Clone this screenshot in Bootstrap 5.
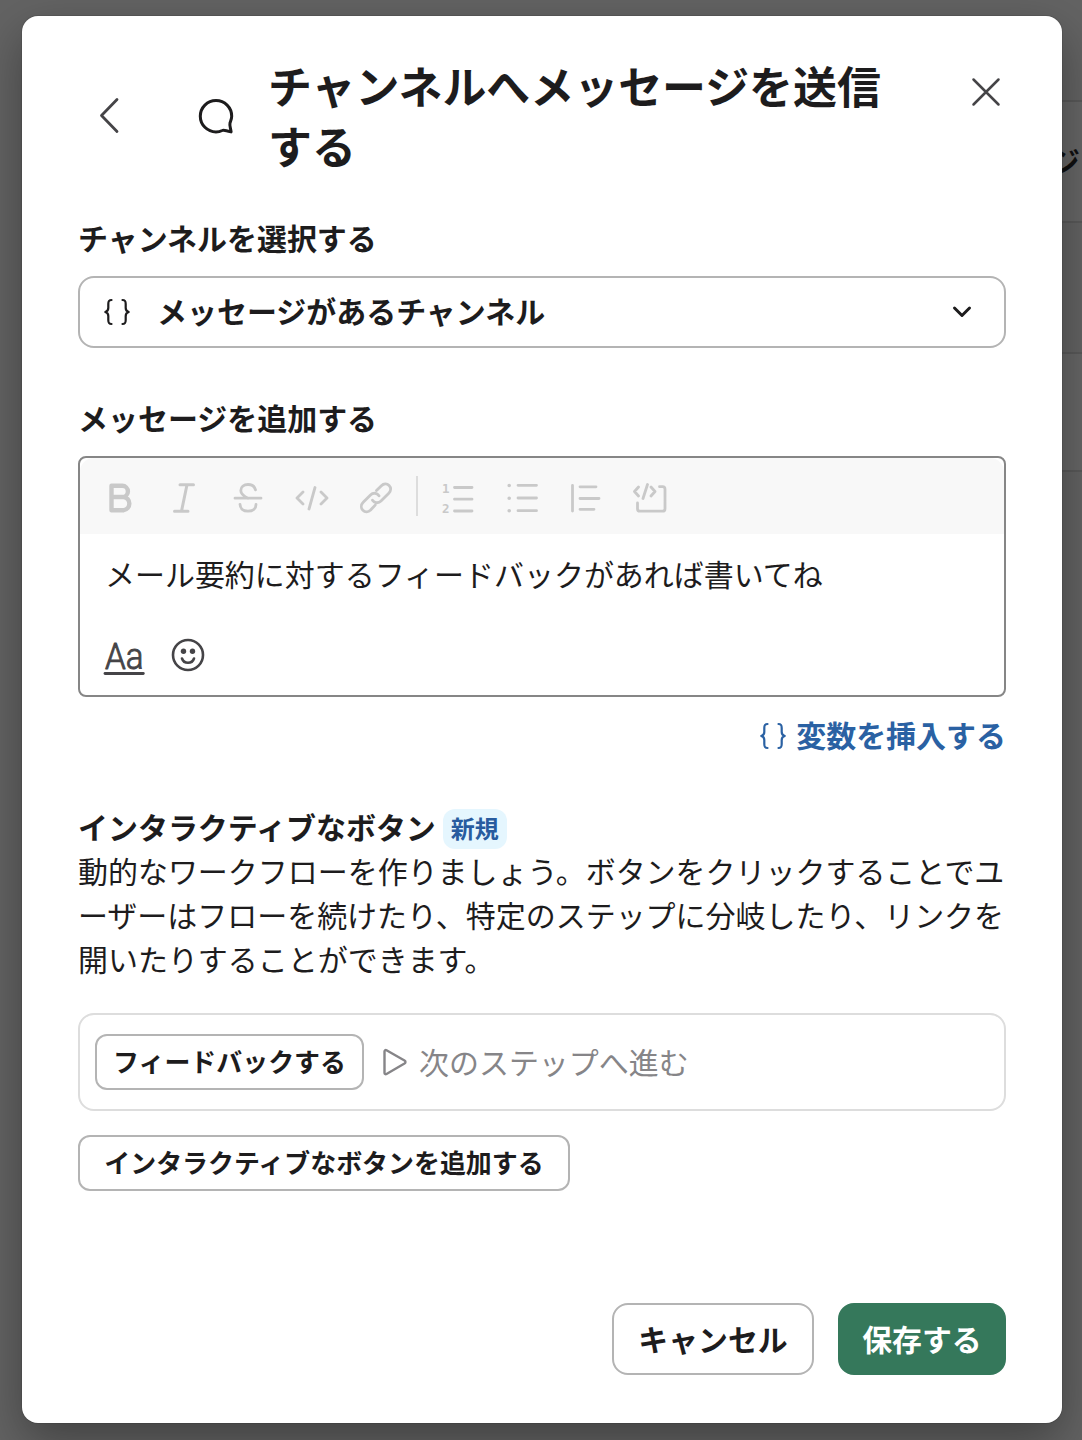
<!DOCTYPE html>
<html lang="ja">
<head>
<meta charset="utf-8">
<meta name="viewport" content="width=device-width, initial-scale=1">
<title>チャンネルへメッセージを送信する</title>
<link href="https://cdn.jsdelivr.net/npm/bootstrap@5.3.0/dist/css/bootstrap.min.css" rel="stylesheet">
<style>
  body { font-family: "Noto Sans CJK JP", sans-serif; font-size: 29.98px; line-height: 44px; color: #1d1c1d; background: #636363; height: 1440px; overflow: hidden; }
  svg { display: block; flex: none; overflow: visible; fill: none; stroke: currentColor; stroke-linecap: round; stroke-linejoin: round; }
  .backdrop-page { position: absolute; top: 0; right: 0; width: 62px; padding-top: 100px; }
  .step-card { height: 123px; border: solid #595959; border-width: 2px 0; background: #666; color: #101010; line-height: 117px; padding-right: 2px; }
  .step-card + .step-card { margin-top: 129px; height: 120px; }
  .dialog-panel { position: relative; width: 1040px; height: 1407px; margin: 16px 0 0 22px; padding: 38px 56px 48px; border-radius: 16px; box-shadow: 0 0 0 1px rgba(29,28,29,.13), 0 18px 48px rgba(0,0,0,.35); }
  .dialog-title { font-size: 43.95px; line-height: 60px; width: 640px; margin-left: 34px; padding-top: 1px; margin-bottom: -1px; }
  .back-btn, .close-btn { color: #454447; }
  .back-btn { margin-left: 20px; }
  .chat-icon { margin: 3px 0 0 76px; }
  .close-btn { margin: 22px 5px 0 auto; }
  .field-label { height: 44px; margin-top: 41px; }
  .channel-select { height: 72px; border: 2px solid #b4b4b4; border-radius: 16px; padding: 0 33px 0 24px; margin-top: 17px; }
  .channel-select span { margin: -4px 0 0 25px; }
  .editor-box { height: 241px; border: 2px solid #868686; border-radius: 8px; margin-top: 17px; }
  .editor-tools { height: 76px; background: #f8f8f8; border-radius: 14px 14px 0 0; color: #c9c9c9; padding: 4px 16px 0; }
  .tool-item { width: 64px; display: flex; justify-content: center; }
  .tool-item:first-child { width: 50px; }
  .tool-rule { width: 2px; height: 40px; background: #ddd; margin: -4px 8px 0; }
  .editor-text { padding: 17px 24px 0 25px; height: 101px; }
  .editor-foot { color: #454447; padding-left: 23px; }
  .var-link { color: #2a61a3; margin-top: 15px; }
  .new-tag { font-size: 24px; line-height: 38px; height: 40px; width: 64px; border-radius: 12px; background: #e5f6fe; color: #285c9f; margin: 5px 0 0 7px; text-align: center; }
  .action-row { height: 98px; border: 2px solid #ddd; border-radius: 16px; padding-left: 15px; color: #868588; margin-top: 33px; }
  .small-btn { font-size: 25.95px; line-height: 50px; height: 56px; padding: 0 0 2px; border: 2px solid #b4b4b4; border-radius: 12px; color: #1d1c1d; background: #fff; font-weight: 700; }
  .foot-btn { height: 72px; line-height: 66px; font-size: 29.88px; font-weight: 700; border-radius: 16px; padding: 0 0 2px; border: 2px solid #b4b4b4; }
  .save-btn, .save-btn:hover { width: 168px; background: #35785b; border-color: #35785b; color: #fff; }
  .cancel-btn { width: 202px; color: #1d1c1d; background: #fff; }
</style>
<script src="https://cdn.jsdelivr.net/npm/bootstrap@5.3.0/dist/js/bootstrap.bundle.min.js"></script>
</head>
<body>
<div class="backdrop-page" aria-hidden="true">
  <div class="step-card fw-bold text-end">ジ</div>
  <div class="step-card"></div>
</div>

<main class="dialog-panel bg-white d-flex flex-column" role="dialog">
  <header class="d-flex align-items-start">
    <div class="d-flex align-items-center">
      <svg class="back-btn" width="24" height="40" viewBox="0 0 24 40" stroke-width="2.8"><path d="M19 5.500 3.500 21.500 19 37.500"/></svg>
      <svg class="chat-icon" width="36" height="36" viewBox="0 0 36 36" stroke-width="3"><path d="M18 2.500a15.700 15.700 0 1 0 0 31.400c2.600 0 4.400-.5 6.200-1.400 1.500-.8 2.500-.5 8.900 1.400-.3-3.300-1.800-6.200-1.100-8.900.8-2.300 1.700-4.200 1.700-6.800C33.700 9.500 26.700 2.500 18 2.500Z"/></svg>
      <h1 class="dialog-title fw-bold">チャンネルへメッセージを送信する</h1>
    </div>
    <svg class="close-btn" width="30" height="32" viewBox="0 0 30 32" stroke-width="2.500"><path d="M2.500 3.500 27.500 28.500M27.500 3.500 2.500 28.500"/></svg>
  </header>

  <label class="field-label fw-bold">チャンネルを選択する</label>
  <div class="channel-select d-flex align-items-center fw-bold">
    <svg width="28" height="28" viewBox="0 0 28 28" stroke-width="2.200"><path id="braces" d="M7.500 2C4.500 2 4.300 3.500 4.300 6v4c0 2.500-.8 3.300-3 4 2.200.7 3 1.500 3 4v4c0 2.500.2 4 3.200 4M18.500 2c3 0 3.200 1.500 3.200 4v4c0 2.500.8 3.300 3 4-2.200.7-3 1.500-3 4v4c0 2.500-.2 4-3.200 4"/></svg>
    <span>メッセージがあるチャンネル</span>
    <svg class="ms-auto" width="18" height="12" viewBox="0 0 18 12" stroke-width="3"><path d="M1.500 2 9 9.500 16.500 2"/></svg>
  </div>

  <label class="field-label fw-bold" style="margin-top:47px">メッセージを追加する</label>
  <div class="editor-box">
    <div class="editor-tools d-flex align-items-center">
      <div class="tool-item"><svg width="32" height="36" viewBox="0 0 32 36" stroke-width="4.400"><path d="M6.500 5.800v24.400H18.800a6.700 6.700 0 0 0 0-13.200H6.500M6.500 5.800H17.300a5.600 5.600 0 0 1 0 11.200"/></svg></div>
      <div class="tool-item" style="margin-left:6px"><svg width="36" height="36" viewBox="0 0 36 36" stroke-width="3"><path d="M14 4.800H27.500M8.500 31.200H22M21 4.800 15.500 31.200"/></svg></div>
      <div class="tool-item"><svg width="36" height="36" viewBox="0 0 36 36" stroke-width="2.800"><path d="M5 18.200H31M25.500 9.800C24.500 6 21.600 4.500 18 4.500c-4 0-7.200 2.200-7.200 6 0 3.700 3 5.700 7.200 7.700M10 24.300c.2 4.200 3.200 6.900 8 6.900s8-2.800 8-6.700"/></svg></div>
      <div class="tool-item"><svg width="36" height="36" viewBox="0 0 36 36" stroke-width="2.800"><path d="M9 12 3 18l6 6M27 12l6 6-6 6M21 7.500 15 29"/></svg></div>
      <div class="tool-item"><svg width="36" height="36" viewBox="0 0 36 36" stroke-width="2.800"><path d="M14.500 20.200c2 3.200 6 3.300 8.500.8l7.800-7.800c2.400-2.400 2.400-5.600.3-7.700s-5.400-2.100-7.700.2L18.500 10.500M21 15.800c-2-3.200-6-3.300-8.500-.8L5.200 22.300c-2.400 2.400-2.400 5.900-.3 8s5.400 2 7.700-.3l4.600-4.900"/></svg></div>
      <div class="tool-rule"></div>
      <div class="tool-item"><svg width="36" height="36" viewBox="0 0 36 36" stroke-width="2.800"><path d="M14.500 7.500H32M14.500 19.200H32M14.500 31H32"/><g fill="currentColor" stroke="none" font-family="DejaVu Sans Mono" font-weight="700" font-size="12.500"><text x="2" y="12.500">1</text><text x="2" y="32.500">2</text></g></svg></div>
      <div class="tool-item"><svg width="36" height="36" viewBox="0 0 36 36" stroke-width="2.800"><path d="M14 5.300H32.500M14 18H32.500M14 30.700H32.500"/><path stroke-width="3.600" d="M5.200 5.500h.01M5.200 18.200h.01M5.200 30.800h.01"/></svg></div>
      <div class="tool-item"><svg width="36" height="36" viewBox="0 0 36 36" stroke-width="2.800"><path d="M4.500 5.500V31M12 6.800H28M12 18.500H31M12 29.300H26"/></svg></div>
      <div class="tool-item"><svg width="36" height="36" viewBox="0 0 36 36" stroke-width="2.800"><path d="M6.500 7 2.500 11.500l4 4.500M19 7l4 4.500-4 4.500M15.500 4.500 11 18.500M27.500 6.700H30.500a2.500 2.500 0 0 1 2.500 2.500V28.700a2.500 2.500 0 0 1-2.500 2.500H8a2.500 2.500 0 0 1-2.500-2.500V23"/></svg></div>
    </div>
    <div class="editor-text">メール要約に対するフィードバックがあれば書いてね</div>
    <div class="editor-foot d-flex align-items-center">
      <svg width="42" height="44" viewBox="0 0 42 44"><text x="2" y="33.500" font-family="Roboto" font-weight="300" font-size="36.500" textLength="38.500" lengthAdjust="spacingAndGlyphs" fill="currentColor" stroke="currentColor" stroke-width=".9">Aa</text><path stroke-width="2.800" d="M2 38.500H40.300"/></svg>
      <svg style="margin-left:26px" width="34" height="44" viewBox="0 0 34 44" stroke-width="2.600"><circle cx="17" cy="20" r="15"/><path d="M11 23.500c1 3 3.200 4.300 6 4.300s5-1.300 6-4.300"/><g fill="currentColor" stroke="none"><circle cx="12.500" cy="16.300" r="2.700"/><circle cx="21.500" cy="16.300" r="2.700"/></g></svg>
    </div>
  </div>
  <a class="var-link d-flex align-items-center fw-bold align-self-end text-decoration-none" href="#">
    <svg width="28" height="28" viewBox="0 0 28 28" stroke-width="2.200" style="margin:3px 8px 0 0"><use href="#braces"/></svg>変数を挿入する
  </a>

  <section style="margin-top:48px">
    <div class="d-flex align-items-start fw-bold" style="height:44px"><span>インタラクティブなボタン</span><span class="new-tag">新規</span></div>
    <p class="mb-0 text-nowrap">動的なワークフローを作りましょう。ボタンをクリックすることでユ<br>ーザーはフローを続けたり、特定のステップに分岐したり、リンクを<br>開いたりすることができます。</p>
  </section>

  <div class="action-row d-flex align-items-center">
    <button class="btn small-btn" style="width:269px">フィードバックする</button>
    <svg style="margin-left:18px" width="26" height="30" viewBox="0 0 26 30" stroke-width="2.400"><path d="M2.500 4.500v21.200c0 1.300 1 1.800 2 1.300L22.500 16.500c1.300-.8 1.300-2.200 0-3L4.500 3.200c-1-.5-2 0-2 1.300Z"/></svg>
    <span style="margin:-3px 0 0 11px">次のステップへ進む</span>
  </div>
  <button class="btn small-btn align-self-start" style="width:492px;margin-top:24px">インタラクティブなボタンを追加する</button>

  <footer class="d-flex justify-content-end gap-4 mt-auto">
    <button class="btn foot-btn cancel-btn">キャンセル</button>
    <button class="btn foot-btn save-btn">保存する</button>
  </footer>
</main>
</body>
</html>
